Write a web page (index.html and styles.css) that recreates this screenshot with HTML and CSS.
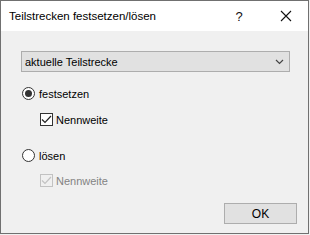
FILE: index.html
```html
<!DOCTYPE html>
<html lang="de">
<head>
<meta charset="utf-8">
<title>Teilstrecken festsetzen/lösen</title>
<link rel="stylesheet" href="styles.css">
</head>
<body>
<div class="dialog">
  <div class="titlebar">
    <span class="title">Teilstrecken festsetzen/lösen</span>
    <span class="help">?</span>
    <span class="close">
      <svg width="12" height="12" viewBox="0 0 12 12"><path d="M1 1 L11 11 M11 1 L1 11" stroke="#111" stroke-width="1.1" fill="none"/></svg>
    </span>
  </div>
  <div class="content">
    <div class="combo">
      <span class="combo-text">aktuelle Teilstrecke</span>
      <svg class="chev" width="9" height="6" viewBox="0 0 9 6"><path d="M1 1 L4.5 4.5 L8 1" stroke="#444" stroke-width="1.2" fill="none"/></svg>
    </div>
    <div class="row radio-row first">
      <span class="radio checked"><span class="dot"></span></span>
      <span class="label">festsetzen</span>
    </div>
    <div class="row check-row">
      <span class="check">
        <svg width="11" height="11" viewBox="0 0 11 11"><path d="M1 5.5 L4 8.5 L10 2" stroke="#222" stroke-width="1.2" fill="none"/></svg>
      </span>
      <span class="label">Nennweite</span>
    </div>
    <div class="row radio-row second">
      <span class="radio"></span>
      <span class="label">lösen</span>
    </div>
    <div class="row check-row disabled">
      <span class="check">
        <svg width="11" height="11" viewBox="0 0 11 11"><path d="M1 5.5 L4 8.5 L10 2" stroke="#c2c2c2" stroke-width="1.2" fill="none"/></svg>
      </span>
      <span class="label">Nennweite</span>
    </div>
    <div class="buttons">
      <button class="ok">OK</button>
    </div>
  </div>
</div>
</body>
</html>
```
FILE: styles.css
```css
html, body {
  margin: 0;
  padding: 0;
  background: #f0f0f0;
}
body {
  width: 310px;
  height: 235px;
  overflow: hidden;
  font-family: "Liberation Sans", Arial, sans-serif;
}
.dialog {
  width: 307px;
  height: 232px;
  border: 1px solid #707070;
  background: #f0f0f0;
  display: flex;
  flex-direction: column;
}
.titlebar {
  height: 30px;
  background: #ffffff;
  display: flex;
  align-items: center;
  flex-shrink: 0;
}
.title {
  font-size: 11.5px;
  color: #000;
  margin-left: 8px;
  flex: 1;
}
.help {
  font-size: 13px;
  color: #111;
  width: 14px;
  margin-right: 34px;
  text-align: center;
}
.close {
  display: flex;
  margin-right: 16px;
}
.content {
  flex: 1;
  padding: 20px 10px 0 20px;
  display: flex;
  flex-direction: column;
  font-size: 11px;
  color: #000;
}
.combo {
  width: 267px;
  height: 19px;
  border: 1px solid #adadad;
  background: #e1e1e1;
  display: flex;
  align-items: center;
  justify-content: space-between;
}
.combo-text {
  margin-left: 3px;
}
.chev {
  margin-right: 5px;
}
.row {
  display: flex;
  align-items: center;
  height: 13px;
}
.radio-row.first {
  margin-top: 15px;
}
.radio-row.second {
  margin-top: 23px;
}
.check-row {
  margin-top: 13px;
  padding-left: 19px;
}
.check-row.disabled {
  margin-top: 12px;
}
.radio {
  width: 11px;
  height: 11px;
  border: 1px solid #333;
  border-radius: 50%;
  background: #fff;
  display: flex;
  align-items: center;
  justify-content: center;
  margin-left: 1px;
}
.radio .dot {
  width: 7px;
  height: 7px;
  border-radius: 50%;
  background: #333;
}
.radio-row .label {
  margin-left: 4px;
}
.check {
  width: 11px;
  height: 11px;
  border: 1px solid #333;
  background: #fff;
  display: flex;
  align-items: center;
  justify-content: center;
}
.check-row .label {
  margin-left: 3px;
}
.disabled .check {
  border-color: #c2c2c2;
  background: #f0f0f0;
}
.disabled .label {
  color: #838383;
}
.buttons {
  display: flex;
  justify-content: flex-end;
  margin-top: 16px;
  padding-right: 1px;
}
.ok {
  width: 73px;
  height: 21px;
  border: 1px solid #adadad;
  background: #e1e1e1;
  font-family: "Liberation Sans", Arial, sans-serif;
  font-size: 12px;
  color: #000;
  padding: 0;
}
```
